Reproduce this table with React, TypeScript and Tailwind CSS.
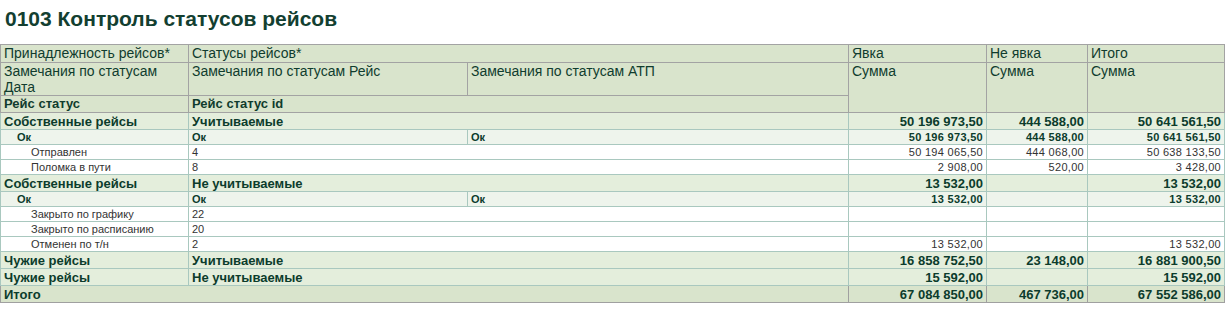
type Row =
  | { kind: "group"; a: string; b: string; v: [string, string, string] }
  | { kind: "ok"; v: [string, string, string] }
  | { kind: "item"; a: string; b: string; v: [string, string, string] };

const rows: Row[] = [
  { kind: "group", a: "Собственные рейсы", b: "Учитываемые", v: ["50 196 973,50", "444 588,00", "50 641 561,50"] },
  { kind: "ok", v: ["50 196 973,50", "444 588,00", "50 641 561,50"] },
  { kind: "item", a: "Отправлен", b: "4", v: ["50 194 065,50", "444 068,00", "50 638 133,50"] },
  { kind: "item", a: "Поломка в пути", b: "8", v: ["2 908,00", "520,00", "3 428,00"] },
  { kind: "group", a: "Собственные рейсы", b: "Не учитываемые", v: ["13 532,00", "", "13 532,00"] },
  { kind: "ok", v: ["13 532,00", "", "13 532,00"] },
  { kind: "item", a: "Закрыто по графику", b: "22", v: ["", "", ""] },
  { kind: "item", a: "Закрыто по расписанию", b: "20", v: ["", "", ""] },
  { kind: "item", a: "Отменен по т/н", b: "2", v: ["13 532,00", "", "13 532,00"] },
  { kind: "group", a: "Чужие рейсы", b: "Учитываемые", v: ["16 858 752,50", "23 148,00", "16 881 900,50"] },
  { kind: "group", a: "Чужие рейсы", b: "Не учитываемые", v: ["15 592,00", "", "15 592,00"] },
];

// header cells: grey borders on sage background
const hd = "border border-[#a3a3a3] bg-[#d9e4cc] align-top px-[3px] leading-[16px] text-[#103c2e] text-left";
const dc = "border border-[#a9c8bf] px-[3px] whitespace-nowrap";

function DataRow({ row }: { row: Row }) {
  if (row.kind === "group") {
    return (
      <tr className="h-[17px] bg-[#e4eedc] text-[13px] leading-[15px] font-bold text-[#0c3c2c]">
        <td className={dc}>{row.a}</td>
        <td className={dc} colSpan={2}>{row.b}</td>
        {row.v.map((x, i) => (
          <td key={i} className={`${dc} text-right`}>{x}</td>
        ))}
      </tr>
    );
  }
  if (row.kind === "ok") {
    return (
      <tr className="h-[15px] bg-[#eef4ec] text-[11px] leading-[13px] font-bold text-[#0c3c2c]">
        <td className={`${dc} pl-[16px]`}>Ок</td>
        <td className={dc}>Ок</td>
        <td className={dc}>Ок</td>
        {row.v.map((x, i) => (
          <td key={i} className={`${dc} text-right tracking-[0.3px]`}>{x}</td>
        ))}
      </tr>
    );
  }
  return (
    <tr className="h-[15px] bg-white text-[11px] leading-[13px] text-[#333333]">
      <td className={`${dc} pl-[30px]`}>{row.a}</td>
      <td className={dc} colSpan={2}>{row.b}</td>
      {row.v.map((x, i) => (
        <td key={i} className={`${dc} text-right tracking-[0.3px]`}>{x}</td>
      ))}
    </tr>
  );
}

export default function App() {
  return (
    <div className="w-[1229px] h-[309px] bg-white font-['Liberation_Sans',Arial,sans-serif] overflow-hidden">
      <h1 className="pl-[5px] pt-[7px] h-[44px] text-[21px] leading-[23px] font-bold text-[#133f31]">
        0103 Контроль статусов рейсов
      </h1>
      <table className="w-[1224px] table-fixed border-collapse">
        <colgroup>
          <col className="w-[188px]" />
          <col className="w-[279px]" />
          <col className="w-[381px]" />
          <col className="w-[138px]" />
          <col className="w-[101px]" />
          <col className="w-[137px]" />
        </colgroup>
        <thead>
          <tr className="h-[18px] text-[14px] font-normal">
            <th className={`${hd} font-normal`}>Принадлежность рейсов*</th>
            <th className={`${hd} font-normal`} colSpan={2}>Статусы рейсов*</th>
            <th className={`${hd} font-normal`}>Явка</th>
            <th className={`${hd} font-normal`}>Не явка</th>
            <th className={`${hd} font-normal`}>Итого</th>
          </tr>
          <tr className="h-[33px] text-[14px]">
            <th className={`${hd} font-normal`}>
              Замечания по статусам
              <br />
              Дата
            </th>
            <th className={`${hd} font-normal`}>Замечания по статусам Рейс</th>
            <th className={`${hd} font-normal`}>Замечания по статусам АТП</th>
            <th className={`${hd} font-normal`} rowSpan={2}>Сумма</th>
            <th className={`${hd} font-normal`} rowSpan={2}>Сумма</th>
            <th className={`${hd} font-normal`} rowSpan={2}>Сумма</th>
          </tr>
          <tr className="h-[17px] text-[13px]">
            <th className={`${hd} font-bold`}>Рейс статус</th>
            <th className={`${hd} font-bold`} colSpan={2}>Рейс статус id</th>
          </tr>
        </thead>
        <tbody>
          {rows.map((r, i) => (
            <DataRow key={i} row={r} />
          ))}
          <tr className="h-[17px] bg-[#d9e4cc] text-[13px] leading-[15px] font-bold text-[#0c3c2c]">
            <td className="border border-[#a0a0a0] px-[3px]" colSpan={3}>Итого</td>
            <td className="border border-[#a0a0a0] px-[3px] text-right">67 084 850,00</td>
            <td className="border border-[#a0a0a0] px-[3px] text-right">467 736,00</td>
            <td className="border border-[#a0a0a0] px-[3px] text-right">67 552 586,00</td>
          </tr>
        </tbody>
      </table>
    </div>
  );
}
